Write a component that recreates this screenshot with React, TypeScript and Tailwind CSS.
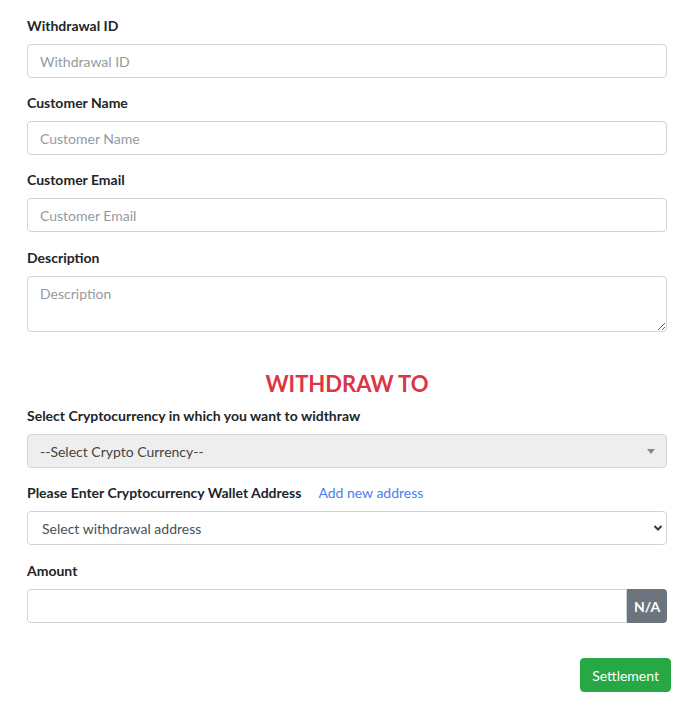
import React from "react";

const font = { fontFamily: "Lato, 'Noto Sans', sans-serif" };

function Label({ children }: { children: React.ReactNode }) {
  return <label className="block h-[21px] leading-[21px] mb-2 text-[14px] font-bold text-[#212529]">{children}</label>;
}

function TextInput({ placeholder }: { placeholder: string }) {
  return (
    <input
      placeholder={placeholder}
      className="block w-full h-[34px] px-3 border border-[#ced4da] rounded-[4px] text-[14px] text-[#495057] placeholder:text-[#939ba2] outline-none bg-white"
    />
  );
}

export default function App() {
  return (
    <div style={font} className="w-[692px] h-[708px] bg-white pt-[15px] pl-[27px] pr-[25px] text-[#212529]">
      <div className="mb-[14px]">
        <Label>Withdrawal ID</Label>
        <TextInput placeholder="Withdrawal ID" />
      </div>
      <div className="mb-[14px]">
        <Label>Customer Name</Label>
        <TextInput placeholder="Customer Name" />
      </div>
      <div className="mb-[15px]">
        <Label>Customer Email</Label>
        <TextInput placeholder="Customer Email" />
      </div>
      <div className="mb-[14px]">
        <Label>Description</Label>
        <textarea
          placeholder="Description"
          className="block w-full h-[56px] px-3 py-[6px] border border-[#ced4da] rounded-[4px] text-[14px] text-[#495057] placeholder:text-[#939ba2] outline-none bg-white"
        />
      </div>

      <h3 className="text-center text-[22px] leading-[26px] font-bold text-[#dc3545] mt-[39px] mb-[8px]">WITHDRAW TO</h3>

      <div className="mb-[14px]">
        <Label>Select Cryptocurrency in which you want to widthraw</Label>
        <div className="relative flex items-center h-[34px] pl-3 border border-[#d2d6da] rounded-[4px] bg-[#eeeeee] text-[14px] text-[#444]">
          <span>--Select Crypto Currency--</span>
          <svg className="absolute right-[11px] top-[14px]" width="8" height="5" viewBox="0 0 8 5">
            <path d="M0 0 L8 0 L4 5 Z" fill="#888" />
          </svg>
        </div>
      </div>

      <div className="mb-[15px]">
        <div className="flex items-center h-[21px] mb-2 text-[14px]">
          <span className="font-bold">Please Enter Cryptocurrency Wallet Address</span>
          <a className="ml-[17px] text-[#4b7ef6]">Add new address</a>
        </div>
        <div className="relative">
          <select className="block w-full h-[34px] pl-[14px] pr-8 border border-[#ced4da] rounded-[4px] text-[14px] text-[#495057] bg-white appearance-none outline-none">
            <option>Select withdrawal address</option>
          </select>
          <svg className="absolute right-[4px] top-[13px] pointer-events-none" width="10" height="8" viewBox="0 0 10 8">
            <path d="M1.5 2 L5 5.5 L8.5 2" stroke="#343a40" strokeWidth="2" fill="none" />
          </svg>
        </div>
      </div>

      <div className="mb-[14px]">
        <Label>Amount</Label>
        <div className="flex h-[34px]">
          <input className="flex-1 min-w-0 h-full px-3 border border-[#ced4da] rounded-l-[4px] text-[14px] outline-none bg-white" />
          <span className="flex items-center justify-center w-[40px] h-full bg-[#6c757d] text-white font-bold text-[14px] rounded-r-[4px]">N/A</span>
        </div>
      </div>

      <div className="flex justify-end mt-[35px] -mr-[4px]">
        <button className="h-[34px] px-[11px] bg-[#28a745] text-white text-[14px] rounded-[4px] border border-[#28a745]">Settlement</button>
      </div>
    </div>
  );
}
